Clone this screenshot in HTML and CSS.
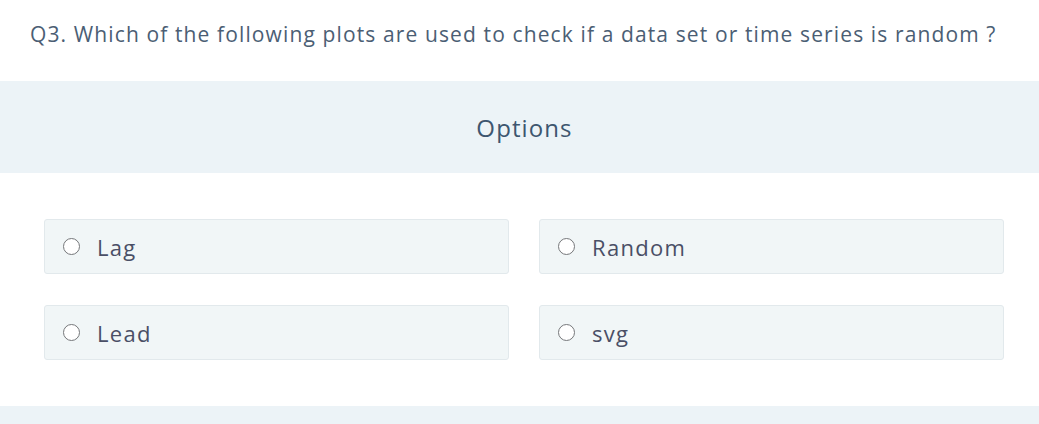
FILE: index.html
```html
<!DOCTYPE html>
<html lang="en">
<head>
<meta charset="utf-8">
<title>Question</title>
<link rel="stylesheet" href="styles.css">
</head>
<body>
<div class="question">Q3. Which of the following plots are used to check if a data set or time series is random ?</div>
<div class="band"><span class="band-title">Options</span></div>
<div class="options">
  <label class="option"><span class="radio"></span><span class="label">Lag</span></label>
  <label class="option"><span class="radio"></span><span class="label">Random</span></label>
  <label class="option"><span class="radio"></span><span class="label">Lead</span></label>
  <label class="option"><span class="radio"></span><span class="label">svg</span></label>
</div>
<div class="footer-band"></div>
</body>
</html>
```

FILE: styles.css
```css
html, body {
  margin: 0;
  padding: 0;
  background: #ffffff;
}
body {
  font-family: "Open Sans", "Lato", sans-serif;
  width: 1039px;
  overflow: hidden;
}
.question {
  height: 81px;
  box-sizing: border-box;
  padding: 19px 0 0 30px;
  font-size: 21px;
  letter-spacing: 1.12px;
  line-height: 30px;
  color: #4b5e74;
  white-space: nowrap;
}
.band {
  height: 92px;
  background: #ecf3f7;
  display: flex;
  align-items: center;
  justify-content: center;
}
.band-title {
  font-size: 24px;
  letter-spacing: 1.1px;
  color: #3d566f;
  margin-left: 10px;
}
.options {
  display: grid;
  grid-template-columns: 465px 465px;
  grid-auto-rows: 55px;
  align-content: start;
  column-gap: 30px;
  row-gap: 31px;
  padding: 46px 0 0 44px;
  height: 233px;
  box-sizing: border-box;
}
.option {
  height: 55px;
  box-sizing: border-box;
  background: #f1f6f7;
  border: 1px solid #e2e9ec;
  border-radius: 3px;
  display: flex;
  align-items: center;
  padding-left: 18px;
}
.radio {
  width: 17px;
  height: 17px;
  box-sizing: border-box;
  border: 1.5px solid #75777a;
  border-radius: 50%;
  background: #ffffff;
  flex: none;
}
.label {
  margin-left: 17px;
  font-size: 22px;
  letter-spacing: 1.3px;
  color: #4a4f66;
}
.footer-band {
  height: 18px;
  background: #ecf3f7;
}
```
